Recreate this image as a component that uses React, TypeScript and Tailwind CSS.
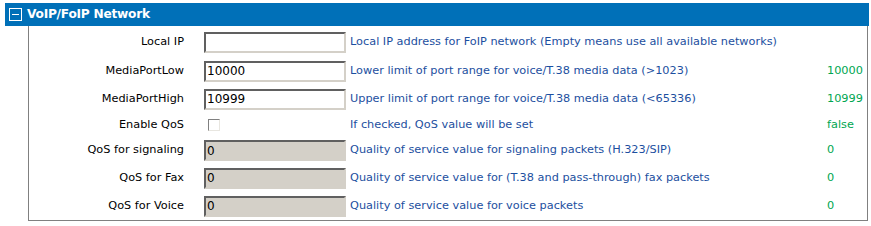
import React from "react";

type Row = {
  label: string;
  value: string;
  disabled?: boolean;
  checkbox?: boolean;
  desc: string;
  cur: string;
  h: string;
};

const rows: Row[] = [
  { label: "Local IP", value: "", desc: "Local IP address for FoIP network (Empty means use all available networks)", cur: "", h: "h-[29px]" },
  { label: "MediaPortLow", value: "10000", desc: "Lower limit of port range for voice/T.38 media data (>1023)", cur: "10000", h: "h-[28px]" },
  { label: "MediaPortHigh", value: "10999", desc: "Upper limit of port range for voice/T.38 media data (<65336)", cur: "10999", h: "h-[28px]" },
  { label: "Enable QoS", value: "", checkbox: true, desc: "If checked, QoS value will be set", cur: "false", h: "h-[24px]" },
  { label: "QoS for signaling", value: "0", disabled: true, desc: "Quality of service value for signaling packets (H.323/SIP)", cur: "0", h: "h-[27px]" },
  { label: "QoS for Fax", value: "0", disabled: true, desc: "Quality of service value for (T.38 and pass-through) fax packets", cur: "0", h: "h-[28px]" },
  { label: "QoS for Voice", value: "0", disabled: true, desc: "Quality of service value for voice packets", cur: "0", h: "h-[28px]" },
];

export default function App() {
  return (
    <div className="w-[871px] h-[226px] bg-white pt-[3px] pl-[5px] text-[11.3px] font-['DejaVu_Sans',Tahoma,sans-serif]">
      <div className="w-[864px] h-[23px] bg-[#0070b8] flex items-center pl-[4px]">
        <span className="w-[13px] h-[13px] border border-white flex items-center justify-center">
          <span className="w-[7px] h-px bg-white" />
        </span>
        <span className="ml-[5px] text-white font-bold text-[12.2px] tracking-[-0.25px]">VoIP/FoIP Network</span>
      </div>
      <div className="ml-[23px] w-[840px] h-[195px] border border-t-0 border-[#808080] pt-[2px]">
        {rows.map((r) => (
          <div key={r.label} className={`flex items-center ${r.h}`}>
            <div className="w-[155px] text-right text-black whitespace-nowrap">{r.label}</div>
            <div className="w-[20px]" />
            <div className="w-[142px] flex">
              {r.checkbox ? (
                <span className="ml-[4px] w-[12px] h-[12px] border border-t-[#808080] border-l-[#808080] border-b-[#e8e6e0] border-r-[#e8e6e0] bg-white" />
              ) : (
                <div
                  className={`w-[142px] h-[21px] border-2 border-t-[#606060] border-l-[#606060] border-b-[#d4d0c8] border-r-[#d4d0c8] pl-[1px] flex items-center text-black text-[12px] ${
                    r.disabled ? "bg-[#d4d0c8]" : "bg-white"
                  }`}
                >
                  {r.value}
                </div>
              )}
            </div>
            <div className="w-[4px]" />
            <div className="w-[477px] text-[#1c4fa0] whitespace-nowrap">{r.desc}</div>
            <div className="text-[#00a651]">{r.cur}</div>
          </div>
        ))}
      </div>
    </div>
  );
}
